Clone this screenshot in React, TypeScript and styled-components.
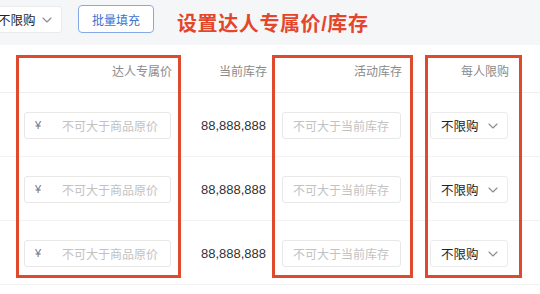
import React from "react";
import styled, { createGlobalStyle } from "styled-components";

const Global = createGlobalStyle`
  html, body { margin: 0; padding: 0; background: #ffffff; }
  body { font-family: "Liberation Sans", "Noto Sans CJK SC", sans-serif; overflow: hidden; }
  * { box-sizing: border-box; }
`;

const Page = styled.div`
  width: 540px;
  height: 294px;
  position: relative;
  overflow: hidden;
  background: #ffffff;
`;

const Toolbar = styled.div`
  height: 45px;
  background: #f5f6f8;
  display: flex;
  align-items: flex-start;
  padding-top: 5px;
`;

const Select = styled.div<{ $width: number; $offset?: number }>`
  width: ${(p) => p.$width}px;
  height: 27px;
  margin-left: ${(p) => p.$offset ?? 0}px;
  margin-top: 1px;
  background: #ffffff;
  border: 1px solid #ebebeb;
  border-radius: 3px;
  display: flex;
  align-items: center;
  justify-content: space-between;
  padding: 0 9px 0 10px;
  font-size: 12.5px;
  color: #222;
`;

const Chevron = () => (
  <svg width="10" height="6" viewBox="0 0 10 6" fill="none">
    <path d="M1 1l4 4 4-4" stroke="#8c8c8c" strokeWidth="1.1" strokeLinecap="round" strokeLinejoin="round" />
  </svg>
);

const FillButton = styled.button`
  margin-left: 16px;
  width: 76px;
  height: 28px;
  background: #ffffff;
  border: 1px solid #86a8e6;
  border-radius: 4px;
  color: #3f6fcf;
  font-family: "Liberation Sans", "Noto Sans CJK SC", sans-serif;
  font-size: 12px;
  padding: 0;
`;

const Title = styled.div`
  margin-left: 23px;
  margin-top: 7px;
  font-size: 20px;
  line-height: 24px;
  font-weight: 700;
  letter-spacing: 0.6px;
  color: #e4462c;
`;

const Table = styled.div`
  position: relative;
`;

const cols = "181px 95px 135px 107px 1fr";

const HeadRow = styled.div`
  display: grid;
  grid-template-columns: ${cols};
  height: 48px;
  border-bottom: 1px solid #eeeeee;
`;

const HeadCell = styled.div`
  display: flex;
  align-items: center;
  justify-content: flex-end;
  padding: 4px 9px 0 0;
  font-size: 12px;
  color: #8a8a8a;
`;

const Row = styled.div`
  display: grid;
  grid-template-columns: ${cols};
  height: 64px;
  border-bottom: 1px solid #f2f2f2;
`;

const Cell = styled.div`
  display: flex;
  align-items: center;
  justify-content: flex-end;
  padding: 1px 10px 0 0;
`;

const Input = styled.div<{ $width: number }>`
  width: ${(p) => p.$width}px;
  height: 27px;
  border: 1px solid #e8e8e8;
  border-radius: 3px;
  display: flex;
  align-items: center;
  padding: 0 10px;
  font-size: 12px;
  color: #c2c2c2;
  background: #fff;
`;

const Yen = styled.span`
  color: #777;
  width: 27px;
  font-size: 11px;
`;

const Value = styled.div`
  font-size: 13px;
  color: #333;
`;

const Mark = styled.div<{ $left: number; $width: number }>`
  position: absolute;
  top: 10px;
  left: ${(p) => p.$left}px;
  width: ${(p) => p.$width}px;
  height: 223px;
  border: 3px solid #df4a2e;
  pointer-events: none;
`;

const rows = [0, 1, 2];

export default function App() {
  return (
    <Page>
      <Global />
      <Toolbar>
        <Select $width={75} $offset={-13}>
          <span>不限购</span>
          <Chevron />
        </Select>
        <FillButton>批量填充</FillButton>
        <Title>设置达人专属价/库存</Title>
      </Toolbar>
      <Table>
        <HeadRow>
          <HeadCell>达人专属价</HeadCell>
          <HeadCell>当前库存</HeadCell>
          <HeadCell>活动库存</HeadCell>
          <HeadCell>每人限购</HeadCell>
          <HeadCell />
        </HeadRow>
        {rows.map((r) => (
          <Row key={r}>
            <Cell>
              <Input $width={147}>
                <Yen>¥</Yen>
                <span>不可大于商品原价</span>
              </Input>
            </Cell>
            <Cell>
              <Value>88,888,888</Value>
            </Cell>
            <Cell>
              <Input $width={119}>不可大于当前库存</Input>
            </Cell>
            <Cell>
              <Select $width={78}>
                <span>不限购</span>
                <Chevron />
              </Select>
            </Cell>
            <Cell />
          </Row>
        ))}
        <Mark $left={16} $width={165} />
        <Mark $left={272} $width={141} />
        <Mark $left={425} $width={97} />
      </Table>
    </Page>
  );
}
